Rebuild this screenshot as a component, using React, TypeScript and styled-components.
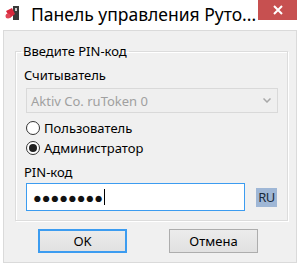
import styled, { createGlobalStyle } from "styled-components"

const Global = createGlobalStyle`
  html, body { margin: 0; padding: 0; background: #ffffff; }
  * { box-sizing: border-box; }
`

const Window = styled.div`
  width: 300px;
  height: 266px;
  display: flex;
  flex-direction: column;
  background: #ffffff;
  font-family: "Noto Sans", "Open Sans", sans-serif;
  font-size: 13px;
  color: #000;
`

const TitleBar = styled.div`
  height: 30px;
  display: flex;
  align-items: flex-start;
`

const TitleIcon = styled.svg`
  margin: 5px 0 0 5px;
`

const TitleText = styled.div`
  font-size: 17.5px;
  line-height: 22px;
  margin: 3px 0 0 10px;
  white-space: nowrap;
`

const CloseBtn = styled.div`
  margin-left: auto;
  margin-right: 3px;
  width: 39px;
  height: 20px;
  background: #c75050;
  display: flex;
  align-items: center;
  justify-content: center;
`

const Panel = styled.div`
  flex: 1;
  margin: 0 3px 3px 3px;
  background: #f0f0f0;
  border: 1px solid #dadada;
  display: flex;
  flex-direction: column;
`

const Group = styled.fieldset`
  margin: 12px 8px 0 11px;
  padding: 8px 8px 9px 8px;
  border: 1px solid #dcdcdc;
  box-shadow: inset 1px 1px 0 #ffffff, 1px 1px 0 #ffffff;
  display: flex;
  flex-direction: column;
  min-width: 0;
`

const Legend = styled.legend`
  padding: 0 2px;
  margin-left: -3px;
  line-height: 16px;
`

const Label = styled.div<{ $top?: number }>`
  line-height: 16px;
  margin-top: ${(p) => p.$top ?? 0}px;
`

const Combo = styled.div`
  margin: 5px 0 0 2px;
  width: 252px;
  height: 25px;
  border: 1px solid #d9d9d9;
  background: #efefef;
  color: #a0a0a0;
  display: flex;
  align-items: center;
  justify-content: space-between;
  padding: 0 6px 0 4px;
`

const RadioRow = styled.div<{ $top: number }>`
  display: flex;
  align-items: center;
  height: 16px;
  margin: ${(p) => p.$top}px 0 0 2px;
  gap: 4px;
`

const RadioDot = styled.span<{ $on?: boolean }>`
  width: 14px;
  height: 14px;
  border-radius: 50%;
  border: 1px solid #333333;
  background: #ffffff;
  display: flex;
  align-items: center;
  justify-content: center;
  &::after {
    content: "";
    display: ${(p) => (p.$on ? "block" : "none")};
    width: 8px;
    height: 8px;
    border-radius: 50%;
    background: #202020;
  }
`

const InputRow = styled.div`
  display: flex;
  align-items: center;
  margin: 3px 0 0 2px;
  gap: 11px;
`

const PinInput = styled.div`
  width: 219px;
  height: 28px;
  border: 1px solid #3c9cf0;
  background: #ffffff;
  display: flex;
  align-items: center;
  padding-left: 6px;
  font-size: 14.5px;
  color: #111;
`

const Caret = styled.span`
  width: 1px;
  height: 16px;
  background: #000;
  margin-left: 1px;
`

const Lang = styled.div`
  width: 21px;
  height: 19px;
  background: #9fb7d6;
  color: #1a2a3a;
  font-size: 13px;
  line-height: 19px;
  text-align: center;
  letter-spacing: -0.5px;
`

const Buttons = styled.div`
  display: flex;
  gap: 42px;
  margin: 8px 0 0 34px;
`

const Button = styled.div<{ $default?: boolean }>`
  width: 89px;
  height: 24px;
  border: 1px solid ${(p) => (p.$default ? "#3c9cf0" : "#adadad")};
  box-shadow: ${(p) => (p.$default ? "inset 0 0 0 1px #3c9cf0" : "none")};
  background: linear-gradient(#ececec, #e1e1e1);
  display: flex;
  align-items: center;
  justify-content: center;
`

export default function App() {
  return (
    <Window>
      <Global />
      <TitleBar>
        <TitleIcon width="16" height="16" viewBox="0 0 16 16">
          <rect x="8" y="1" width="6" height="14" fill="#3a3a3a" />
          <rect x="10" y="3" width="2" height="3" fill="#cfcfcf" />
          <path d="M1 6 L7 3 L10 9 L5 13 Z" fill="#d8283c" />
          <circle cx="3" cy="11" r="2.5" fill="#e04656" />
        </TitleIcon>
        <TitleText>Панель управления Руто...</TitleText>
        <CloseBtn>
          <svg width="10" height="10" viewBox="0 0 10 10">
            <path d="M1 1 L9 9 M9 1 L1 9" stroke="#fff" strokeWidth="2" />
          </svg>
        </CloseBtn>
      </TitleBar>
      <Panel>
        <Group>
          <Legend>Введите PIN-код</Legend>
          <Label>Считыватель</Label>
          <Combo>
            <span>Aktiv Co. ruToken 0</span>
            <svg width="8" height="5" viewBox="0 0 8 5">
              <path d="M0.5 0.5 L4 4 L7.5 0.5" stroke="#a8a8a8" strokeWidth="1.5" fill="none" />
            </svg>
          </Combo>
          <RadioRow $top={7}>
            <RadioDot />
            <span>Пользователь</span>
          </RadioRow>
          <RadioRow $top={4}>
            <RadioDot $on />
            <span>Администратор</span>
          </RadioRow>
          <Label $top={8}>PIN-код</Label>
          <InputRow>
            <PinInput>
              ●●●●●●●●
              <Caret />
            </PinInput>
            <Lang>RU</Lang>
          </InputRow>
        </Group>
        <Buttons>
          <Button $default>OK</Button>
          <Button>Отмена</Button>
        </Buttons>
      </Panel>
    </Window>
  )
}
